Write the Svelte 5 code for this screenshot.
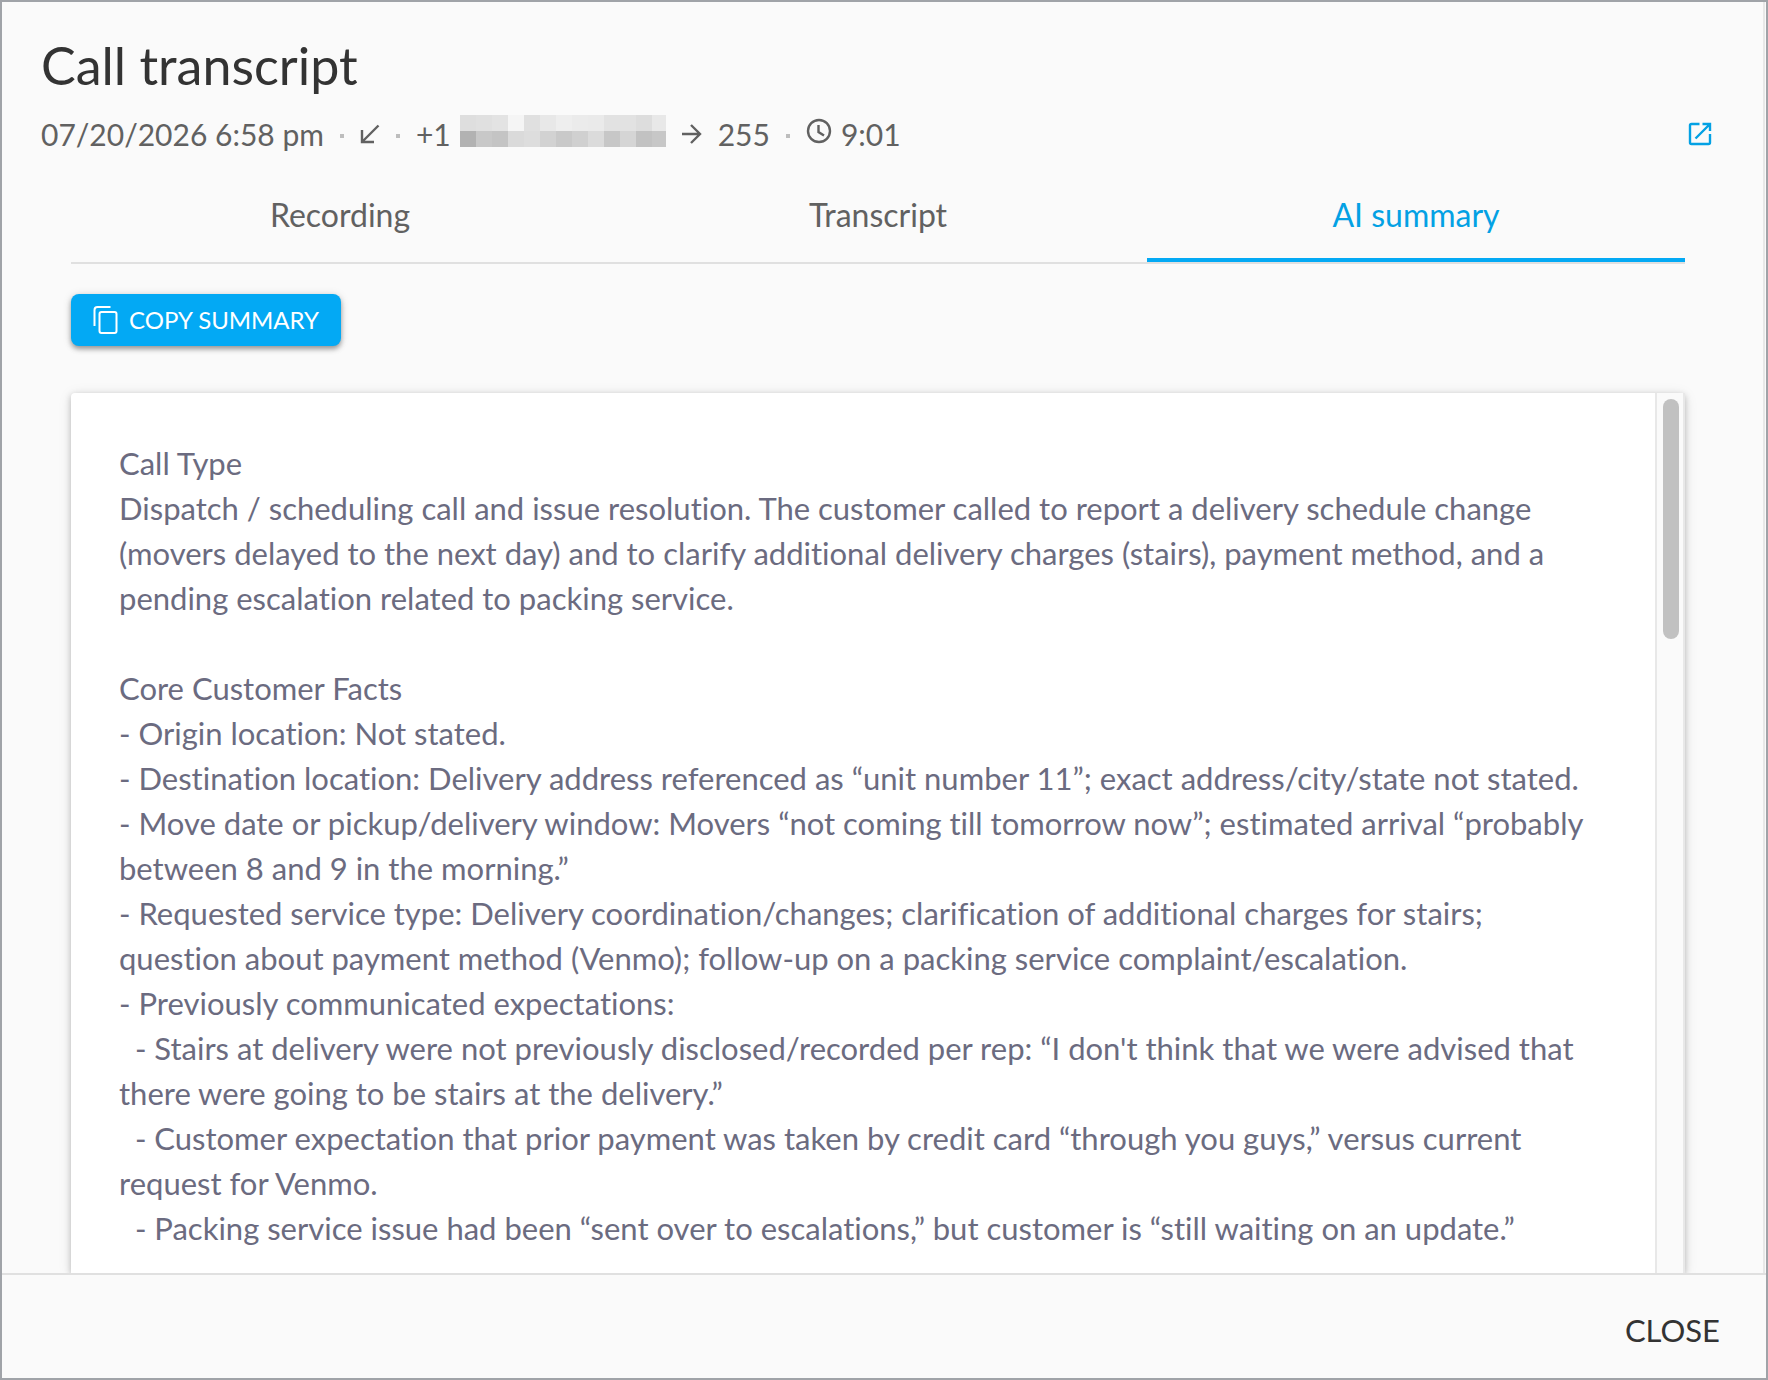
<script>
  const tabs = ['Recording', 'Transcript', 'AI summary'];
  let active = $state('AI summary');

  const masked = [
    ['#dedede', '#e0e0e0', '#e3e3e3', '#f5f5f5', '#e0e0e0', '#e8e8e8', '#eeeeee', '#ebebeb', '#eaeaea', '#e2e2e2', '#e2e2e2', '#dddddd', '#e8e8e8'],
    ['#b2b2b2', '#c8c8c8', '#c4c4c4', '#dadada', '#dddddd', '#d2d2d2', '#c9c9c9', '#d0d0d0', '#dbdbdb', '#c7c7c7', '#d5d5d5', '#c2c2c2', '#c7c7c7']
  ];

  const summary = `Call Type
Dispatch / scheduling call and issue resolution. The customer called to report a delivery schedule change (movers delayed to the next day) and to clarify additional delivery charges (stairs), payment method, and a pending escalation related to packing service.

Core Customer Facts
- Origin location: Not stated.
- Destination location: Delivery address referenced as “unit number 11”; exact address/city/state not stated.
- Move date or pickup/delivery window: Movers “not coming till tomorrow now”; estimated arrival “probably between 8 and 9 in the morning.”
- Requested service type: Delivery coordination/changes; clarification of additional charges for stairs; question about payment method (Venmo); follow-up on a packing service complaint/escalation.
- Previously communicated expectations:
  - Stairs at delivery were not previously disclosed/recorded per rep: “I don't think that we were advised that there were going to be stairs at the delivery.”
  - Customer expectation that prior payment was taken by credit card “through you guys,” versus current request for Venmo.
  - Packing service issue had been “sent over to escalations,” but customer is “still waiting on an update.”`;
</script>

<div class="dialog">
  <main class="body">
    <header>
      <h1>Call transcript</h1>
      <div class="meta">
        <span>07/20/2026 6:58 pm</span>
        <i class="dot"></i>
        <svg class="arrow" viewBox="0 0 20 20" aria-label="Incoming"><path d="M18.500 1.500 2.500 17.500M2 6v12h12" /></svg>
        <i class="dot"></i>
        <span class="number">+1
          <svg class="mask" viewBox="0 0 206 32" shape-rendering="crispEdges" aria-label="Hidden number">
            {#each masked as row, y}
              {#each row as fill, x}
                <rect x={x * 16} y={y * 16} width="16" height="16" {fill} />
              {/each}
            {/each}
          </svg>
        </span>
        <svg class="arrow" viewBox="0 0 20 20" aria-label="to"><path d="M0 10h18M9 1l9 9-9 9" /></svg>
        <span>255</span>
        <i class="dot"></i>
        <span class="duration">
          <svg class="clock" viewBox="0 0 26 26" aria-hidden="true"><circle cx="13" cy="13" r="11" /><path d="M12.500 7v7l5.500 3.500" /></svg>
          9:01
        </span>
        <a class="open" href="#call" aria-label="Open in new window">
          <svg viewBox="0 0 24 24" aria-hidden="true">
            <path d="M11.500 2H3.500Q2 2 2 3.500V20.500Q2 22 3.500 22H20.500Q22 22 22 20.500V12M22 9V2H14.500M21 3 7.500 16.500" />
            <path class="tip" d="M17 1h6v6z" />
          </svg>
        </a>
      </div>
    </header>

    <section class="content">
      <div class="tabs" role="tablist">
        {#each tabs as tab}
          <button role="tab" class:active={tab === active} aria-selected={tab === active} onclick={() => (active = tab)}>{tab}</button>
        {/each}
      </div>

      <button class="copy">
        <svg viewBox="0 0 24 28" aria-hidden="true"><path d="M1 20V4a3 3 0 0 1 3-3h13" /><rect x="6" y="6" width="17" height="21" rx="2" /></svg>
        COPY SUMMARY
      </button>

      <div class="card">
        <div class="text">{summary}</div>
        <div class="track"><div class="thumb"></div></div>
      </div>
    </section>
  </main>

  <footer>
    <button class="close">CLOSE</button>
  </footer>
</div>

<style>
  :global(body) {
    margin: 0;
    background: #fafafa;
  }
  .dialog {
    box-sizing: border-box;
    height: 100vh;
    display: flex;
    flex-direction: column;
    border: 2px solid #a0a3a8;
    background: #fafafa;
    color: #616161;
    font: 30px/36px Lato, sans-serif;
    font-variant-ligatures: none;
  }
  button {
    margin: 0;
    border: 0;
    background: none;
    color: inherit;
    font: inherit;
    cursor: pointer;
  }
  svg {
    flex: none;
    fill: none;
    stroke: currentColor;
    stroke-width: 2;
  }
  .body {
    flex: 1;
    min-height: 0;
    display: flex;
    flex-direction: column;
    overflow: hidden;
    margin-right: 1px;
    border-right: 2px solid #e8e8e8;
  }
  header {
    padding: 32px 51px 0 39px;
  }
  h1 {
    margin: 0;
    color: #333;
    font-size: 52px;
    line-height: 62px;
    font-weight: 400;
  }
  .meta {
    display: flex;
    align-items: center;
    gap: 16px;
    height: 36px;
    margin-top: 20px;
  }
  .dot {
    width: 4px;
    height: 4px;
    margin-top: 4px;
    background: #bdbdbd;
  }
  .arrow {
    width: 20px;
    height: 20px;
    stroke-width: 2.4;
  }
  .number,
  .duration {
    display: flex;
    align-items: center;
    gap: 9px;
  }
  .mask {
    width: 206px;
    height: 32px;
    margin-bottom: 6px;
    stroke: none;
  }
  .clock {
    width: 26px;
    height: 26px;
    margin-bottom: 6px;
    stroke-width: 2.4;
  }
  .open {
    display: flex;
    margin-left: auto;
    color: #03a1e4;
  }
  .open svg {
    width: 24px;
    height: 24px;
    stroke-width: 2.4;
  }
  .open .tip {
    fill: currentColor;
    stroke: none;
  }
  .content {
    flex: 1;
    min-height: 0;
    display: flex;
    flex-direction: column;
    align-items: flex-start;
    padding: 26px 78px 0 69px;
  }
  .tabs {
    display: grid;
    grid-template-columns: repeat(3, 1fr);
    width: 100%;
    border-bottom: 2px solid #e0e0e0;
  }
  .tabs button {
    height: 84px;
    padding: 0 0 6px;
    border-bottom: 4px solid transparent;
    font-size: 32px;
  }
  .tabs .active {
    border-color: #03a9f4;
    color: #03a1e4;
  }
  .copy {
    display: flex;
    flex: none;
    align-items: center;
    gap: 11px;
    height: 52px;
    margin: 30px 0 47px;
    padding: 0 22px;
    border-radius: 8px;
    background: #03a9f4;
    box-shadow: 0 3px 5px rgb(0 0 0 / 35%), 0 1px 10px rgb(0 0 0 / 12%);
    color: #fff;
    font-size: 24px;
  }
  .copy svg {
    width: 25px;
    height: 28px;
  }
  .card {
    flex: 1;
    min-height: 0;
    display: flex;
    width: 100%;
    border-radius: 4px 4px 0 0;
    background: #fff;
    box-shadow: 0 2px 6px rgb(0 0 0 / 22%), 0 2px 14px rgb(0 0 0 / 10%);
  }
  .text {
    flex: 1;
    padding: 48px 48px 0;
    overflow: hidden;
    color: #6b6b80;
    font-size: 31px;
    line-height: 45px;
    white-space: pre-wrap;
  }
  .track {
    box-sizing: border-box;
    width: 30px;
    padding: 6px;
    border: solid #e8e8e8;
    border-width: 0 2px;
    background: #fafafa;
  }
  .thumb {
    width: 16px;
    height: 240px;
    border-radius: 8px;
    background: #c1c1c1;
  }
  footer {
    display: flex;
    justify-content: flex-end;
    align-items: center;
    height: 97px;
    padding: 6px 34px 0;
    border-top: 2px solid #e0e0e0;
  }
  .close {
    padding: 8px 12px;
    color: #333;
    font-size: 31px;
  }
</style>
